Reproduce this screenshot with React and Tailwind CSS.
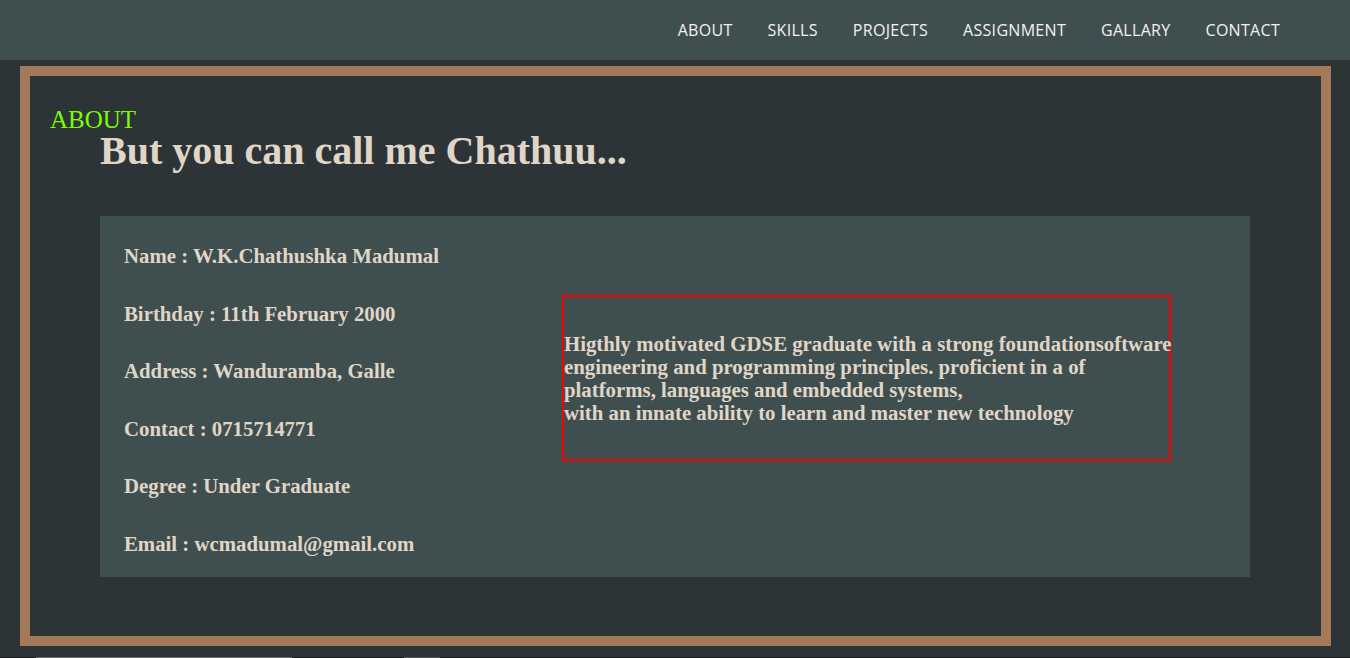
export default function App() {
  const nav = ["ABOUT", "SKILLS", "PROJECTS", "ASSIGNMENT", "GALLARY", "CONTACT"];
  const info = [
    "Name : W.K.Chathushka Madumal",
    "Birthday : 11th February 2000",
    "Address : Wanduramba, Galle",
    "Contact : 0715714771",
    "Degree : Under Graduate",
    "Email : wcmadumal@gmail.com",
  ];
  const serif = { fontFamily: '"Liberation Serif", "Times New Roman", serif' };
  return (
    <div className="w-[1350px] bg-[#2c3437]">
      <header
        className="h-[60px] bg-[#3f4f4f] flex items-center justify-end pr-[70px] gap-[35px]"
        style={{ fontFamily: '"Open Sans", sans-serif' }}
      >
        {nav.map((n) => (
          <span key={n} className="text-[16px] text-[#f2f2f2] tracking-[0.3px] leading-none">
            {n}
          </span>
        ))}
      </header>
      <section className="pt-[6px] pb-[11px] pl-[20px] pr-[19px]">
        <div className="h-[580px] border-[10px] border-[#a47a5b] bg-[#2c3437] pl-[20px] pt-[31px]" style={serif}>
          <div className="text-[25px] leading-[26px] text-[#7cfc00]">ABOUT</div>
          <h1 className="ml-[50px] text-[40px] leading-[36px] font-bold text-[#e0d6c8] whitespace-nowrap">
            But you can call me Chathuu...
          </h1>
          <div className="ml-[50px] mt-[47px] w-[1150px] h-[361px] bg-[#3f4f4f] flex">
            <div className="pl-[24px] pt-[29px] flex flex-col gap-[35.6px] w-[462px] shrink-0">
              {info.map((t) => (
                <div key={t} className="text-[20.8px] leading-[22px] font-bold text-[#e0d6c8] whitespace-nowrap">
                  {t}
                </div>
              ))}
            </div>
            <div className="mt-[79px] w-[609px] h-[166px] border-2 border-[#ff0000] flex items-center shrink-0">
              <p className="text-[20.8px] leading-[23px] font-bold text-[#e0d6c8] whitespace-nowrap">
                Higthly motivated GDSE graduate with a strong foundationsoftware
                <br />
                engineering and programming principles. proficient in a of
                <br />
                platforms, languages and embedded systems,
                <br />
                with an innate ability to learn and master new technology
              </p>
            </div>
          </div>
        </div>
      </section>
      <div className="h-[1px] bg-[#1b1d1e] flex">
        <div className="ml-[36px] w-[256px] bg-[#6b6b6b]" />
        <div className="ml-[112px] w-[36px] bg-[#5a5a5a]" />
      </div>
    </div>
  );
}
